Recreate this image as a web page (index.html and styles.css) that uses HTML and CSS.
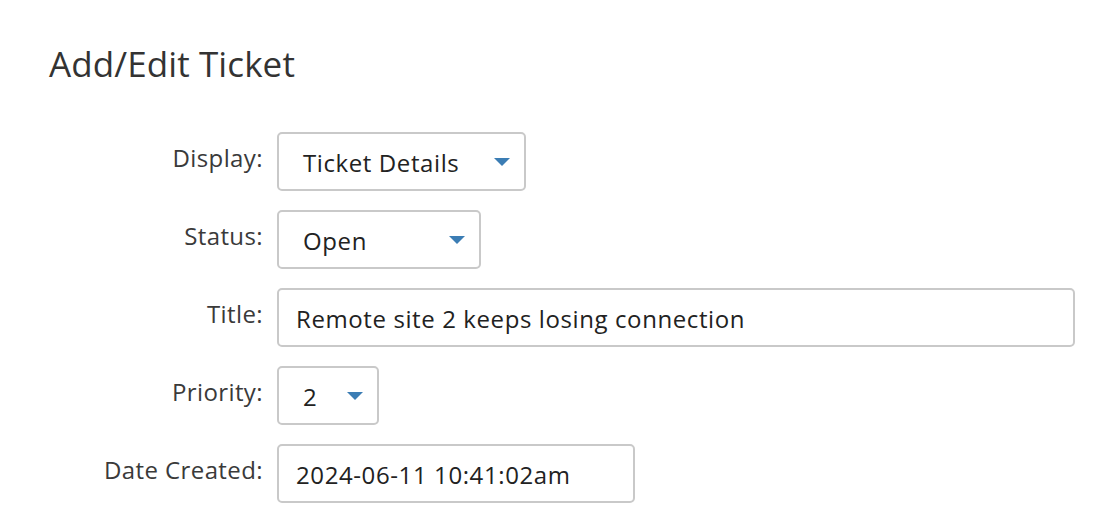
FILE: index.html
```html
<!DOCTYPE html>
<html>
<head>
<meta charset="utf-8">
<link rel="stylesheet" href="styles.css">
</head>
<body>
<div class="page">
  <h1 class="heading">Add/Edit Ticket</h1>
  <div class="form">
    <label class="label">Display:</label>
    <div class="field">
      <div class="select select-display"><span class="value">Ticket Details</span><span class="caret"></span></div>
    </div>
    <label class="label">Status:</label>
    <div class="field">
      <div class="select select-status"><span class="value">Open</span><span class="caret"></span></div>
    </div>
    <label class="label">Title:</label>
    <div class="field">
      <div class="input input-title">Remote site 2 keeps losing connection</div>
    </div>
    <label class="label">Priority:</label>
    <div class="field">
      <div class="select select-priority"><span class="value">2</span><span class="caret"></span></div>
    </div>
    <label class="label">Date Created:</label>
    <div class="field">
      <div class="input input-date">2024-06-11 10:41:02am</div>
    </div>
  </div>
</div>
</body>
</html>
```
FILE: styles.css
```css
html, body {
  margin: 0;
  padding: 0;
  background: #ffffff;
}
body {
  font-family: "Open Sans", "Noto Sans", sans-serif;
  color: #333333;
}
.page {
  padding: 43px 0 0 0;
}
.heading {
  margin: 0 0 0 49px;
  font-size: 35px;
  font-weight: 400;
  line-height: 42px;
  color: #333333;
  letter-spacing: 0.1px;
}
.form {
  margin-top: 47px;
  display: grid;
  grid-template-columns: 263px 1fr;
  column-gap: 14px;
  row-gap: 19px;
  padding-right: 29px;
}
.label {
  text-align: right;
  font-size: 24px;
  line-height: 28px;
  padding-top: 12px;
  letter-spacing: 0.4px;
  color: #3a3a3a;
}
.field {
  display: flex;
}
.select, .input {
  box-sizing: border-box;
  height: 59px;
  border: 2px solid #c9c9c9;
  border-radius: 5px;
  font-size: 24px;
  letter-spacing: 0.6px;
  color: #222222;
  display: flex;
  align-items: center;
  padding-top: 2px;
}
.select {
  padding-left: 24px;
  padding-right: 14px;
  justify-content: space-between;
}
.caret {
  width: 0;
  height: 0;
  border-left: 8px solid transparent;
  border-right: 8px solid transparent;
  border-top: 8px solid #3b7db4;
  margin-top: -2px;
}
.select-display { width: 249px; }
.select-status { width: 204px; }
.select-priority { width: 102px; }
.input { padding-left: 17px; }
.input-title { flex: 1; }
.input-date { width: 358px; }
```
